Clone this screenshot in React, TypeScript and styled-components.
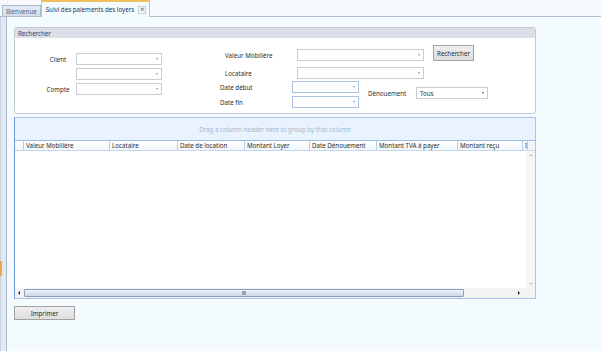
import React from "react";
import styled, { createGlobalStyle } from "styled-components";

const Global = createGlobalStyle`
  html, body { margin: 0; padding: 0; }
  body {
    width: 601px; height: 351px; overflow: hidden;
    background: #f3fbff;
    font-family: "Noto Sans", "Open Sans", sans-serif;
    font-size: 6.2px;
    color: #2e2e2e;
  }
  * { box-sizing: border-box; }
`;

const Shell = styled.div`
  width: 601px; height: 351px;
  display: flex; flex-direction: column;
`;

const TabStrip = styled.div`
  height: 17px; flex: none;
  display: flex; align-items: flex-end;
  padding-left: 2px;
  background: #f7fafd;
  border-bottom: 1px solid #aebdd0;
`;

const Tab = styled.div<{ $active?: boolean }>`
  height: ${(p) => (p.$active ? "17px" : "12px")};
  margin-bottom: -1px;
  display: flex; align-items: center; gap: 4px;
  padding: 0 ${(p) => (p.$active ? "3px" : "3px")} 0 ${(p) => (p.$active ? "4px" : "3px")};
  background: ${(p) => (p.$active ? "#f3fbff" : "linear-gradient(#e4ebf3, #d3dde9)")};
  border: 1px solid ${(p) => (p.$active ? "#e3c27a" : "#a9b8cb")};
  border-bottom: ${(p) => (p.$active ? "none" : "1px solid #aebdd0")};
  border-top: ${(p) => (p.$active ? "2px solid #f0c060" : "1px solid #a9b8cb")};
  color: ${(p) => (p.$active ? "#24365e" : "#54658a")};
  white-space: nowrap;
`;

const CloseBox = styled.span`
  width: 8px; height: 8px;
  display: inline-flex; align-items: center; justify-content: center;
  border: 1px solid #c9d3e0;
  background: #eef3f9;
  color: #3b4b6e;
  font-size: 7px; line-height: 1;
`;

const Main = styled.div`
  flex: 1; display: flex; min-height: 0;
`;

const SideStrip = styled.div`
  width: 7px; flex: none;
  display: flex; flex-direction: column;
  background: #e2e9f1;
  border-right: 1px solid #a7b7cc;
  border-left: 1px solid #c8d4e2;
`;

const SideSpacer = styled.div`
  height: 244px;
`;

const SideMark = styled.div`
  width: 2px; height: 15px;
  background: #f0a94a;
  margin-left: -1px;
`;

const Content = styled.div`
  flex: 1;
  padding: 10px 0 0 7px;
  display: flex; flex-direction: column;
`;

const Panel = styled.div`
  width: 522px; height: 87px;
  border: 1px solid #c3c8d1;
  border-radius: 3px;
  background: #ffffff;
  display: flex; flex-direction: column;
  overflow: hidden;
`;

const PanelHead = styled.div`
  height: 10px; flex: none;
  background: #dcdfe8;
  color: #2e3f6e;
  padding-left: 3px;
  display: flex; align-items: center;
`;

const PanelBody = styled.div`
  flex: 1; display: flex;
`;

const ColA = styled.div`
  margin-left: 25px;
  padding-top: 15px;
  display: flex; flex-direction: column; gap: 3px;
`;

const Row = styled.div`
  display: flex; align-items: center;
`;

const Label = styled.span<{ $w: number; $center?: boolean }>`
  width: ${(p) => p.$w}px;
  flex: none;
  text-align: ${(p) => (p.$center ? "center" : "left")};
  white-space: nowrap;
`;

const Combo = styled.div<{ $w: number; $blue?: boolean }>`
  width: ${(p) => p.$w}px; height: 12px; flex: none;
  border: 1px solid ${(p) => (p.$blue ? "#a8c2e4" : "#c9ccd1")};
  background: #fff;
  display: flex; align-items: center; justify-content: space-between;
  padding: 0 3px 0 3px;
`;

const Caret = styled.span<{ $dark?: boolean }>`
  width: 0; height: 0;
  border-left: 1.5px solid transparent;
  border-right: 1.5px solid transparent;
  border-top: 2px solid ${(p) => (p.$dark ? "#555" : "#8c96a6")};
  margin-left: auto;
`;

const ColB = styled.div`
  margin-left: 58px;
  padding-top: 7px;
  display: flex; flex-direction: column;
`;

const TopBlock = styled.div`
  display: flex; align-items: flex-start;
`;

const TopFields = styled.div`
  margin-top: 4px;
  padding-left: 5px;
  display: flex; flex-direction: column; gap: 6px;
`;

const Button = styled.button<{ $w: number; $h: number }>`
  width: ${(p) => p.$w}px; height: ${(p) => p.$h}px;
  border: 1px solid #a3a3a3;
  background: linear-gradient(#eeeeee, #dedede);
  font-family: inherit; font-size: 6.2px; color: #2e2e2e;
  padding: 0; margin: 0;
  display: flex; align-items: center; justify-content: center;
`;

const RechBtn = styled(Button)`
  margin-left: 9px;
`;

const BottomBlock = styled.div`
  margin-top: 2px;
  display: flex; align-items: flex-start;
`;

const DateFields = styled.div`
  display: flex; flex-direction: column; gap: 3px;
`;

const DenBlock = styled.div`
  margin-left: 9px;
  margin-top: 6px;
  display: flex; align-items: center;
`;

const Grid = styled.div`
  width: 522px; height: 182px;
  margin-top: 3px;
  border: 1px solid #a9c4e6;
  border-left-color: #6e9bd6;
  background: #fff;
  display: flex; flex-direction: column;
`;

const GroupPanel = styled.div`
  height: 22px; flex: none;
  background: #e8f3fd;
  color: #a2b6cd;
  display: flex; align-items: center; justify-content: center;
`;

const HeaderRow = styled.div`
  height: 11px; flex: none;
  display: flex;
  border-top: 1px solid #9ebce2;
  border-bottom: 1px solid #c5d7ec;
  background: linear-gradient(#ffffff, #f1f6fb);
`;

const HeadCell = styled.div<{ $w: number }>`
  width: ${(p) => p.$w}px; flex: none;
  border-right: 1px solid #b6cbe5;
  padding-left: 2px;
  display: flex; align-items: center;
  white-space: nowrap; overflow: hidden;
`;

const HeadFill = styled.div`
  flex: 1;
  background: #f4f4f4;
`;

const Body = styled.div`
  flex: 1; display: flex; min-height: 0;
`;

const Rows = styled.div`
  flex: 1;
`;

const VScroll = styled.div`
  width: 9px; flex: none;
  background: #f5f5f5;
  display: flex; flex-direction: column; align-items: center; justify-content: space-between;
  padding: 3px 0 3px;
`;

const ArrowUp = styled.span`
  width: 0; height: 0;
  border-left: 2px solid transparent;
  border-right: 2px solid transparent;
  border-bottom: 2px solid #c3c3c3;
`;

const ArrowDown = styled.span`
  width: 0; height: 0;
  border-left: 2px solid transparent;
  border-right: 2px solid transparent;
  border-top: 2px solid #c3c3c3;
`;

const HScroll = styled.div`
  height: 10px; flex: none;
  display: flex; align-items: center;
  background: #f3f3f3;
`;

const ArrowSide = styled.span<{ $right?: boolean }>`
  width: 0; height: 0; flex: none;
  border-top: 2px solid transparent;
  border-bottom: 2px solid transparent;
  ${(p) =>
    p.$right
      ? "border-left: 2px solid #1f2b4d; margin-left: auto; margin-right: 15px;"
      : "border-right: 2px solid #1f2b4d; margin-left: 3px; margin-right: 4px;"}
`;

const Thumb = styled.div`
  width: 440px; height: 8px; flex: none;
  border: 1px solid #8d9cbb;
  border-radius: 1px;
  background: linear-gradient(#f2f5fa, #dde4ee 50%, #cfd8e6);
  display: flex; align-items: center; justify-content: center;
`;

const Grip = styled.span`
  width: 4px; height: 4px;
  background: #9aa3b1;
`;

const PrintBtn = styled(Button)`
  margin-top: 7px;
`;

const Footer = styled.div`
  display: flex;
`;

const columns: [string, number][] = [
  ["", 9],
  ["Valeur Mobilière", 86],
  ["Locataire", 68],
  ["Date de location", 67],
  ["Montant Loyer", 65],
  ["Date Dénouement", 67],
  ["Montant TVA à payer", 81],
  ["Montant reçu", 65],
  ["I", 5],
];

export default function App() {
  return (
    <>
      <Global />
      <Shell>
        <TabStrip>
          <Tab>Bienvenue</Tab>
          <Tab $active>
            Suivi des paiements des loyers
            <CloseBox>×</CloseBox>
          </Tab>
        </TabStrip>
        <Main>
          <SideStrip>
            <SideSpacer />
            <SideMark />
          </SideStrip>
          <Content>
            <Panel>
              <PanelHead>Rechercher</PanelHead>
              <PanelBody>
                <ColA>
                  <Row>
                    <Label $w={36} $center>Client</Label>
                    <Combo $w={86}><Caret /></Combo>
                  </Row>
                  <Row>
                    <Label $w={36} $center></Label>
                    <Combo $w={86}><Caret /></Combo>
                  </Row>
                  <Row>
                    <Label $w={36} $center>Compte</Label>
                    <Combo $w={86}><Caret /></Combo>
                  </Row>
                </ColA>
                <ColB>
                  <TopBlock>
                    <TopFields>
                      <Row>
                        <Label $w={72}>Valeur Mobilière</Label>
                        <Combo $w={127}><Caret /></Combo>
                      </Row>
                      <Row>
                        <Label $w={72}>Locataire</Label>
                        <Combo $w={127}><Caret /></Combo>
                      </Row>
                    </TopFields>
                    <RechBtn $w={41} $h={16}>Rechercher</RechBtn>
                  </TopBlock>
                  <BottomBlock>
                    <DateFields>
                      <Row>
                        <Label $w={72}>Date début</Label>
                        <Combo $w={67} $blue><Caret /></Combo>
                      </Row>
                      <Row>
                        <Label $w={72}>Date fin</Label>
                        <Combo $w={67} $blue><Caret /></Combo>
                      </Row>
                    </DateFields>
                    <DenBlock>
                      <Label $w={48}>Dénouement</Label>
                      <Combo $w={72}>Tous<Caret $dark /></Combo>
                    </DenBlock>
                  </BottomBlock>
                </ColB>
              </PanelBody>
            </Panel>
            <Grid>
              <GroupPanel>Drag a column header here to group by that column</GroupPanel>
              <HeaderRow>
                {columns.map(([name, w], i) => (
                  <HeadCell key={i} $w={w}>{name}</HeadCell>
                ))}
                <HeadFill />
              </HeaderRow>
              <Body>
                <Rows />
                <VScroll>
                  <ArrowUp />
                  <ArrowDown />
                </VScroll>
              </Body>
              <HScroll>
                <ArrowSide />
                <Thumb><Grip /></Thumb>
                <ArrowSide $right />
              </HScroll>
            </Grid>
            <Footer>
              <PrintBtn $w={61} $h={14}>Imprimer</PrintBtn>
            </Footer>
          </Content>
        </Main>
      </Shell>
    </>
  );
}
